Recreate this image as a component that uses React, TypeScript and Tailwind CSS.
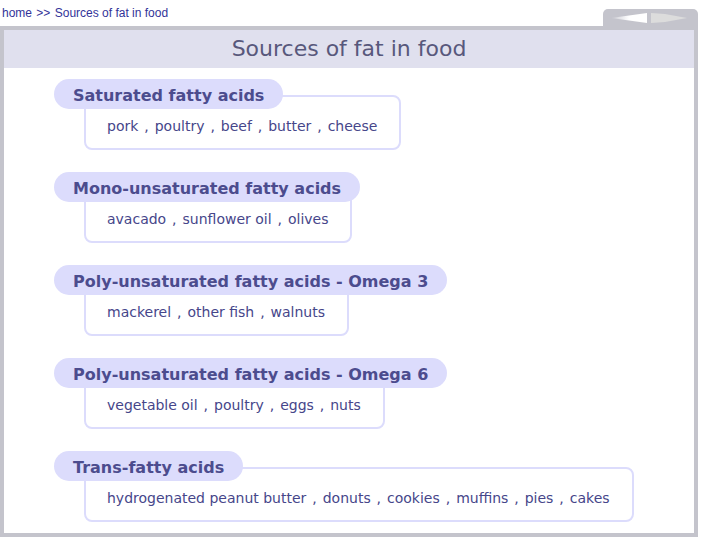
import React from 'react';

type Group = { title: string; items: string[] };

const groups: Group[] = [
  { title: 'Saturated fatty acids', items: ['pork', 'poultry', 'beef', 'butter', 'cheese'] },
  { title: 'Mono-unsaturated fatty acids', items: ['avacado', 'sunflower oil', 'olives'] },
  { title: 'Poly-unsaturated fatty acids - Omega 3', items: ['mackerel', 'other fish', 'walnuts'] },
  { title: 'Poly-unsaturated fatty acids - Omega 6', items: ['vegetable oil', 'poultry', 'eggs', 'nuts'] },
  {
    title: 'Trans-fatty acids',
    items: ['hydrogenated peanut butter', 'donuts', 'cookies', 'muffins', 'pies', 'cakes'],
  },
];

const NavTab: React.FC = () => (
  <div className="w-[95px] h-[17px] bg-[#c4c4cc] rounded-t-[5px] flex items-center justify-center">
    <svg width="80" height="12" viewBox="0 0 80 12">
      <defs>
        <linearGradient id="lg" x1="0" x2="1" y1="0" y2="0">
          <stop offset="0" stopColor="#c8c8d0" />
          <stop offset="0.5" stopColor="#ffffff" />
          <stop offset="1" stopColor="#ffffff" />
        </linearGradient>
      </defs>
      <polygon points="0,6 36,1 36,11" fill="url(#lg)" />
      <polygon points="40,1 54,2 76,6 54,10 40,11" fill="#dcdcdc" />
    </svg>
  </div>
);

const Section: React.FC<{ group: Group }> = ({ group }) => (
  <div className="flex flex-col items-start">
    <div className="relative z-10 h-[30px] flex items-center pt-[3px] px-[19px] rounded-full bg-[#dcdcfc] text-[#4c4c8e] font-bold text-[16px] leading-none">
      {group.title}
    </div>
    <div className="ml-[30px] -mt-[14px] border-2 border-[#dcdcfc] rounded-[8px] bg-white pl-[21px] pr-[22px] pt-[20px] pb-[13px] text-[14px] leading-[18px] text-[#46468a]">
      {group.items.map((item, i) => (
        <React.Fragment key={item + i}>
          {i > 0 && <span className="px-[1.5px]"> , </span>}
          {item}
        </React.Fragment>
      ))}
    </div>
  </div>
);

const App: React.FC = () => {
  return (
    <div className="min-h-screen bg-white font-['DejaVu_Sans',Verdana,sans-serif]">
      <div className="w-[698px] flex justify-between items-end h-[26px]">
        <div className="self-start pt-[6px] pl-[2px] text-[12px] leading-[14px] text-[#333399] font-['Liberation_Sans',Arial,sans-serif]">
          home <span className="px-[1px]">&gt;&gt;</span> Sources of fat in food
        </div>
        <NavTab />
      </div>
      <div className="w-[698px] h-[511px] border-4 border-[#c4c4cc] bg-white">
        <div className="h-[38px] bg-[#e0e0ee] flex items-center justify-center pb-[2px] text-[22px] text-[#58587c]">
          Sources of fat in food
        </div>
        <div className="pl-[50px] pt-[11px] flex flex-col gap-[22px]">
          {groups.map(g => (
            <Section key={g.title} group={g} />
          ))}
        </div>
      </div>
    </div>
  );
};

export default App;
